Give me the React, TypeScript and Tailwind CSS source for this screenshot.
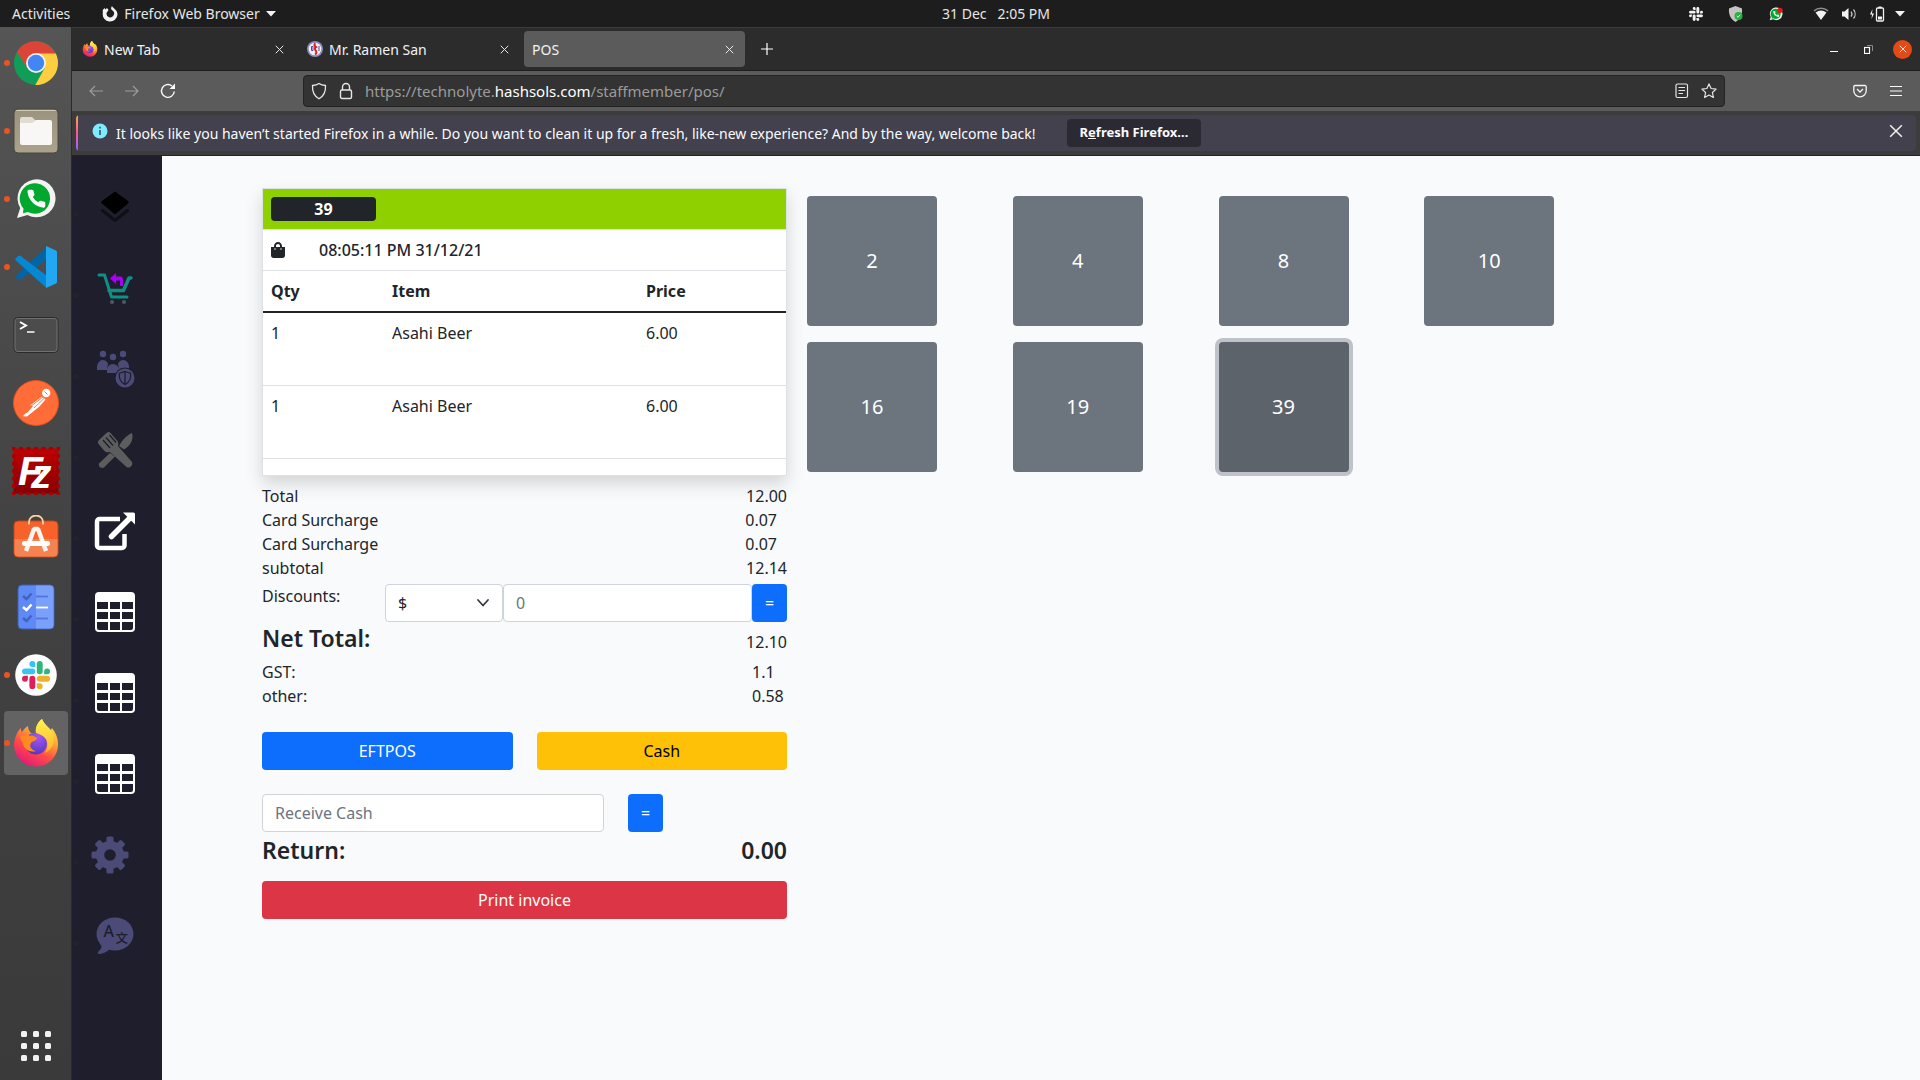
import type { ReactNode } from "react";
import { FaShoppingBag } from "react-icons/fa";

const SLACK = {
  pink: "M5.042 15.165a2.528 2.528 0 0 1-2.52 2.523A2.528 2.528 0 0 1 0 15.165a2.527 2.527 0 0 1 2.522-2.52h2.52v2.52zM6.313 15.165a2.527 2.527 0 0 1 2.521-2.52 2.527 2.527 0 0 1 2.521 2.52v6.313A2.528 2.528 0 0 1 8.834 24a2.528 2.528 0 0 1-2.521-2.522v-6.313z",
  blue: "M8.834 5.042a2.528 2.528 0 0 1-2.521-2.52A2.528 2.528 0 0 1 8.834 0a2.528 2.528 0 0 1 2.521 2.522v2.52H8.834zM8.834 6.313a2.528 2.528 0 0 1 2.521 2.521 2.528 2.528 0 0 1-2.521 2.521H2.522A2.528 2.528 0 0 1 0 8.834a2.528 2.528 0 0 1 2.522-2.521h6.312z",
  green: "M18.956 8.834a2.528 2.528 0 0 1 2.522-2.521A2.528 2.528 0 0 1 24 8.834a2.528 2.528 0 0 1-2.522 2.521h-2.522V8.834zM17.688 8.834a2.528 2.528 0 0 1-2.523 2.521 2.527 2.527 0 0 1-2.52-2.521V2.522A2.527 2.527 0 0 1 15.165 0a2.528 2.528 0 0 1 2.523 2.522v6.312z",
  yellow: "M15.165 18.956a2.528 2.528 0 0 1 2.523 2.522A2.528 2.528 0 0 1 15.165 24a2.527 2.527 0 0 1-2.52-2.522v-2.522h2.52zM15.165 17.688a2.527 2.527 0 0 1-2.52-2.523 2.526 2.526 0 0 1 2.52-2.52h6.313A2.527 2.527 0 0 1 24 15.165a2.528 2.528 0 0 1-2.522 2.523h-6.313z",
};

const PHONE =
  "M22 16.92v3a2 2 0 0 1-2.18 2 19.79 19.79 0 0 1-8.63-3.07 19.5 19.5 0 0 1-6-6 19.79 19.79 0 0 1-3.07-8.67A2 2 0 0 1 4.11 2h3a2 2 0 0 1 2 1.72c.127.96.361 1.903.7 2.81a2 2 0 0 1-.45 2.11L8.09 9.91a16 16 0 0 0 6 6l1.27-1.27a2 2 0 0 1 2.11-.45c.907.339 1.85.573 2.81.7A2 2 0 0 1 22 16.92z";

/* ---------- Dock icons (48 × 48 canvas) ---------- */

function ChromeIcon() {
  return (
    <svg viewBox="0 0 48 48" className="size-12">
      <circle cx="24" cy="24" r="22" fill="#0f9d58" />
      <path d="M4.9 13A22 22 0 0 1 43.4 14.5H24L15.3 29z" fill="#db4437" />
      <path d="M24 14.5h19.8A22 22 0 0 1 23.3 46L32.7 29z" fill="#ffcd40" />
      <circle cx="24" cy="24" r="10" fill="#f1f1f1" />
      <circle cx="24" cy="24" r="8.2" fill="#4285f4" />
    </svg>
  );
}

function FilesIcon() {
  return (
    <svg viewBox="0 0 48 48" className="size-12">
      <defs>
        <linearGradient id="files-bg" x1="0" y1="0" x2="0" y2="1">
          <stop offset="0" stopColor="#9b937d" />
          <stop offset="1" stopColor="#aaa28c" />
        </linearGradient>
      </defs>
      <rect x="2" y="2" width="44" height="44" rx="4" fill="url(#files-bg)" stroke="#4a463c" />
      <path d="M4 3.5h40" stroke="#cfc8b4" />
      <path d="M8 17v-5a2 2 0 0 1 2-2h10l4 4h-2v3z" fill="#e0dcd0" />
      <path d="M8 16h12l4-3h14a2 2 0 0 1 2 2v21a2 2 0 0 1-2 2H10a2 2 0 0 1-2-2z" fill="#f8f7f5" />
    </svg>
  );
}

function WhatsAppIcon({ className, badge }: { className: string; badge?: boolean }) {
  return (
    <svg viewBox="0 0 48 48" className={className}>
      <path d="M5 43 8.2 33A19 19 0 1 1 15.5 40z" fill="#f3f3f3" />
      <path d="M11.5 33.5A15.2 15.2 0 1 1 16 37l-5 1.2z" fill="#00a82d" />
      <g transform="translate(13.5 13) scale(0.9)">
        <path d={PHONE} fill="#f8f8f8" />
      </g>
      {badge && <circle cx="36" cy="13" r="8" fill="#f01414" />}
    </svg>
  );
}

function VSCodeIcon() {
  return (
    <svg viewBox="0 0 48 48" className="size-12">
      <path d="M3.4 33.5 34.5 4v12L8.6 36.6a2 2 0 0 1-2.6 0l-2.6-2.4z" fill="#0065a9" />
      <path d="M3.4 15.7 6 13.2a2 2 0 0 1 2.7-.1L34.5 32.5V45L3.4 17a1 1 0 0 1 0-1.3z" fill="#0588d1" />
      <path d="m34 3 10 4.6a1.8 1.8 0 0 1 1 1.6v29.6a1.8 1.8 0 0 1-1 1.6L34 45z" fill="#22a7f2" />
    </svg>
  );
}

function TerminalIcon() {
  return (
    <svg viewBox="0 0 48 48" className="size-12">
      <rect x="2" y="6.500" width="44" height="35" rx="4" fill="#4c4c4c" stroke="#2b2b2b" />
      <rect x="3" y="7.500" width="42" height="33" rx="3" fill="none" stroke="#707070" />
      <path d="m8 11 6 3.500L8 18" fill="none" stroke="#fff" strokeWidth="2" />
      <path d="M15 21h7.500" stroke="#fff" strokeWidth="1.500" />
    </svg>
  );
}

function PostmanIcon() {
  return (
    <svg viewBox="0 0 48 48" className="size-12">
      <circle cx="24" cy="24" r="22.500" fill="#ff6c37" stroke="#e0521f" />
      <circle cx="34.200" cy="14" r="4.200" fill="#fff" />
      <path d="m30 17.500 3.500 3-6 7L15 37.500l-4-.2 1.500-2 3.500-2.300 5-6-3-.5z" fill="#fff" />
      <path d="m19 27 12-9M22 29l10-9.500M32.500 12.500l3 3" stroke="#ff6c37" strokeWidth="0.9" />
    </svg>
  );
}

function FileZillaIcon() {
  return (
    <svg viewBox="0 0 48 48" className="size-12">
      <defs>
        <linearGradient id="fz-bg" x1="0" y1="0" x2="0" y2="1">
          <stop offset="0" stopColor="#bf0000" />
          <stop offset="1" stopColor="#860000" />
        </linearGradient>
      </defs>
      <rect x="1.500" y="1.500" width="45" height="45" fill="url(#fz-bg)" />
      <rect x="1.500" y="1.500" width="45" height="45" fill="none" stroke="#a80000" strokeWidth="4" strokeLinecap="round" strokeDasharray="0.1 7.400" />
      <text x="6" y="38" fontFamily="Liberation Sans" fontSize="41" fontWeight="700" fontStyle="italic" fill="#fff">
        F<tspan dx="-12" dy="3">z</tspan>
      </text>
    </svg>
  );
}

function SoftwareIcon() {
  return (
    <svg viewBox="0 4 48 48" className="size-12">
      <rect x="2" y="10" width="44" height="36" rx="4" fill="#f8622a" stroke="#c4441a" />
      <path d="M2.500 28h43v13.500a4 4 0 0 1-4 4h-35a4 4 0 0 1-4-4z" fill="#f58352" />
      <path d="M17 13.500V11a7 6.500 0 0 1 14 0v2.500" fill="none" stroke="#f2d6a8" strokeWidth="1.800" />
      <path d="m14 40 8-22h4l8 22" fill="none" stroke="#f6f3f0" strokeWidth="4.500" strokeLinejoin="bevel" />
      <rect x="10" y="30" width="28" height="5" rx="2.500" fill="#fff" />
    </svg>
  );
}

function TodoIcon() {
  return (
    <svg viewBox="0 0 48 48" className="size-12">
      <rect x="6" y="2" width="36" height="44" rx="4" fill="#5e89f6" stroke="#3e5fae" />
      <path d="M24 2.500h14a3.500 3.500 0 0 1 3.500 3.500v36a3.500 3.500 0 0 1-3.500 3.500H24z" fill="#7ba0fb" />
      <g fill="none" strokeWidth="2.500">
        <path d="m11 13 3.500 3 5-5.500" stroke="#4264bd" />
        <path d="M24 13.500h12" stroke="#5077d6" strokeWidth="1.800" />
        <path d="m11 24 3.500 3 5-5.500" stroke="#fff" />
        <path d="M24 24.500h12" stroke="#fff" strokeWidth="1.800" />
        <path d="m11 35 3.500 3 5-5.500" stroke="#4264bd" />
        <path d="M24 35.500h12" stroke="#5077d6" strokeWidth="1.800" />
      </g>
    </svg>
  );
}

function SlackDockIcon() {
  return (
    <svg viewBox="0 0 48 48" className="size-12">
      <circle cx="24" cy="24" r="20.800" fill="#fff" />
      <g transform="translate(10 10) scale(1.17)">
        <path d={SLACK.pink} fill="#e01e5a" />
        <path d={SLACK.blue} fill="#36c5f0" />
        <path d={SLACK.green} fill="#2eb67d" />
        <path d={SLACK.yellow} fill="#ecb22e" />
      </g>
    </svg>
  );
}

function FirefoxIcon({ className }: { className: string }) {
  return (
    <svg viewBox="0 0 48 48" className={className}>
      <defs>
        <linearGradient id="ff-body" x1="0.8" y1="0" x2="0.25" y2="1">
          <stop offset="0" stopColor="#fff44f" />
          <stop offset="0.35" stopColor="#ffa436" />
          <stop offset="0.65" stopColor="#ff4a48" />
          <stop offset="1" stopColor="#e3147e" />
        </linearGradient>
        <linearGradient id="ff-flame" x1="0" y1="0" x2="0" y2="1">
          <stop offset="0" stopColor="#fff44f" />
          <stop offset="1" stopColor="#ffb02e" />
        </linearGradient>
        <radialGradient id="ff-globe" cx="0.6" cy="0.2" r="0.9">
          <stop offset="0" stopColor="#a855f7" />
          <stop offset="1" stopColor="#4a35b5" />
        </radialGradient>
      </defs>
      <path
        d="M4 17c1-4 3-6 5-8 0 2 0 3 1 4 2-3 4-5 6-6 0 3 1 5 3 7h5c-1-6 2-11 6-14 2 5 5 7 9 11l1-2c4 5 6 10 6 16a22 22 0 0 1-44 1c0-4 1-7 2-9z"
        fill="url(#ff-body)"
      />
      <circle cx="24" cy="24.500" r="11" fill="url(#ff-globe)" />
      <path d="M24 14c-1-6 2-11 6-14 2 6 9 9 11 16 2 8-1 15-8 18 3-5 4-12-1-16-2-2-5-3-8-4z" fill="url(#ff-flame)" />
      <path d="M8 18c3-3 7-3 10-1 3-1 4 0 7 2 0 3-5 3-6 5-2 3 0 7 5 8-6 2-12-2-13-7z" fill="#ff8a1f" />
    </svg>
  );
}

/* ---------- Shop side menu icons (48 × 48 canvas) ---------- */

const LayersIcon = () => (
  <svg viewBox="0 0 48 48" className="size-12">
    <path d="m24 8.500 13 9.500a1.500 1.500 0 0 1 0 2.500l-13 11-13-11a1.500 1.500 0 0 1 0-2.500z" fill="#000" />
    <path d="m11.500 27.500 12.500 10 12.500-10" fill="none" stroke="#0f0f16" strokeWidth="3" strokeLinecap="round" strokeLinejoin="round" />
  </svg>
);

const CartIcon = () => (
  <svg viewBox="0 0 48 48" className="size-12">
    <path d="M8 11h5.500l7 22H36" fill="none" stroke="#109083" strokeWidth="3" strokeLinejoin="round" strokeLinecap="round" />
    <path d="M40 14h-2l-5.500 12.500H18" fill="none" stroke="#109083" strokeWidth="3.500" strokeLinejoin="round" strokeLinecap="round" />
    <path d="M25 9v3.500h3.500c3 0 3.500 1.500 3.500 3.500v6h-3v-5.500h-4V20l-6-5.500z" fill="#a600f5" />
    <circle cx="21" cy="38" r="2" fill="#4d5a68" />
    <circle cx="33" cy="38" r="2" fill="#4d5a68" />
  </svg>
);

const StaffIcon = () => (
  <svg viewBox="0 0 48 48" className="size-12" fill="#4c4b78">
    <circle cx="12" cy="9" r="3.200" />
    <circle cx="22" cy="12" r="3.200" />
    <circle cx="32" cy="9" r="3.200" />
    <path d="M6 25v-4a6 6 0 0 1 8-5.500c1.500.5 2 2 3 3l-1 6.500z" />
    <path d="M38 25v-4a6 6 0 0 0-8-5.500c-1.500.5-2 2-3 3l1 6.500z" />
    <path d="M16 28v-3a6 6 0 0 1 12 0v3z" />
    <circle cx="34" cy="33" r="10.500" fill="#1f1e2c" />
    <circle cx="34" cy="33" r="9.500" />
    <path d="m34 26.500 5.500 1.700c.8 5-1.500 9.300-5.500 11.300-4-2-6.300-6.300-5.500-11.300z" fill="none" stroke="#1f1e2c" strokeWidth="1.300" />
    <path d="M34 26.500v13" stroke="#1f1e2c" strokeWidth="1.300" />
  </svg>
);

const CutleryIcon = () => (
  <svg viewBox="0 0 48 48" className="size-12" fill="#5d5d5d">
    <path d="M41 7c2 7-2 13-8 16.500l-5-3.500C32 13 36 9 41 7z" />
    <path d="m19 27 5 3.500-11 11c-3 1.500-6-1-5-4z" />
    <path d="M16 6.500c1.500-1 2.500-.5 3.500.5l7 8c1 1.500 1 3 .5 5L41 36c1.500 3-2.500 7-5.500 5L19 26c-3 .5-4 .5-5.500-1l-6-7c-1-1.500-.5-3 .5-4z" />
    <path d="m12 14 7 8M15 11.500l7 8M18.500 9l6.500 7.500" stroke="#1f1e2c" strokeWidth="1.300" />
  </svg>
);

const ExternalIcon = () => (
  <svg viewBox="0 -2 48 48" className="size-12" fill="none" stroke="#fff">
    <path d="M29 10H8.500A2.500 2.500 0 0 0 6 12.500v24A2.500 2.500 0 0 0 8.500 39H31a2.500 2.500 0 0 0 2.500-2.500V25" strokeWidth="4.500" />
    <path d="M20.500 27.500 40 8" strokeWidth="5.500" strokeLinecap="round" />
    <path d="M32 3.500h10.500a1.500 1.500 0 0 1 1.500 1.500v10.500z" fill="#fff" stroke="none" />
  </svg>
);

const TableIcon = () => (
  <svg viewBox="0 0 48 48" className="size-12">
    <rect x="4" y="4" width="40" height="40" rx="4" fill="#fff" />
    <path
      d="M6 14h11v7H6zM19 14h10v7H19zM31 14h11v7H31zM6 24h11v7H6zM19 24h10v7H19zM31 24h11v7H31zM6 34h11v8H8a2 2 0 0 1-2-2zM19 34h10v8H19zM31 34h11v6a2 2 0 0 1-2 2h-9z"
      fill="#1f1e2c"
    />
  </svg>
);

const GearIcon = () => (
  <svg viewBox="0 0 48 48" className="size-12" fill="#4c4b78">
    {[0, 45, 90, 135].map((a) => (
      <rect key={a} x="20.500" y="5.500" width="7" height="37" rx="1.500" transform={`rotate(${a} 24 24)`} />
    ))}
    <circle cx="24" cy="24" r="14" />
    <circle cx="24" cy="24" r="5.800" fill="#1f1e2c" />
  </svg>
);

const TranslateIcon = () => (
  <svg viewBox="0 0 48 48" className="size-12">
    <ellipse cx="24" cy="22" rx="18.500" ry="16.500" fill="#4c4b78" />
    <path d="m8 30 2.500 4c0 2.500-1.500 4-3.500 6-.8 1 0 2 1.500 2 4-.5 7-2 10-4.500z" fill="#4c4b78" />
    <text x="12.500" y="25" fontFamily="Noto Sans" fontSize="16" fontWeight="500" fill="#1f1e2c">A</text>
    <text x="24.500" y="30.500" fontFamily="Noto Sans CJK SC" fontSize="12.500" fontWeight="500" fill="#1f1e2c">文</text>
  </svg>
);

/* ---------- Desktop ---------- */

function TopBar() {
  return (
    <header className="grid h-[27px] shrink-0 grid-cols-3 items-center bg-[#1d1d1d] text-[14px] text-[#e6e6e6]">
      <div className="flex items-center pl-3">
        <button>Activities</button>
        <button className="ml-8 flex items-center">
          <svg viewBox="0 0 16 16" className="mr-[6px] size-4">
            <path d="M.8 4 2.500 2l.8 1.500L5 2l1.500 2L4.500 7a3.800 3.800 0 1 0 6-2.500C9 3.500 8.500 2 10 0c.5 2 5.500 3.500 5.500 8.500a7.400 7.400 0 1 1-14.700-1.500z" fill="#f2f2f2" />
          </svg>
          Firefox Web Browser
          <svg viewBox="0 0 10 6" className="ml-[6px] h-[6px] w-[10px]"><path d="M0 0h10L5 5.500z" fill="#f2f2f2" /></svg>
        </button>
      </div>
      <button className="justify-self-center whitespace-pre pl-[72px]">31 Dec   2:05 PM</button>
      <div className="flex items-center justify-end pr-[15px]">
        <svg viewBox="0 0 24 24" className="size-[14px]" fill="#f2f2f2">
          <path d={SLACK.pink} /><path d={SLACK.blue} /><path d={SLACK.green} /><path d={SLACK.yellow} />
        </svg>
        <svg viewBox="0 0 16 16" className="ml-[25px] size-4">
          <path d="M7.500 0 14 2.500c.5 6-1.500 10.500-6.500 13.500C2.500 13 .5 8.500 1 2.500z" fill="#c4c4c4" />
          <circle cx="10.500" cy="10" r="4" fill="#25b33e" />
          <path d="m8.700 10 1.300 1.300 2.200-2.600" fill="none" stroke="#d9ffe0" />
        </svg>
        <WhatsAppIcon className="ml-6 size-4" badge />
        <svg viewBox="0 0 16 14" className="ml-[29px] h-[14px] w-4">
          <path d="M1 3.800A11 11 0 0 1 15 3.800" fill="none" stroke="#8f8f8f" strokeWidth="1.500" />
          <path d="M2.500 5.500a9 9 0 0 1 11 0L8 13z" fill="#f2f2f2" />
        </svg>
        <svg viewBox="0 0 16 14" className="ml-3 h-[14px] w-4">
          <path d="M1 4.500h2.500L7.500 1v12L3.500 9.500H1z" fill="#f2f2f2" />
          <path d="M10 4.500a4 4 0 0 1 0 5M12.500 2.500a7 7 0 0 1 0 9" fill="none" stroke="#c9c9c9" strokeWidth="1.200" />
        </svg>
        <svg viewBox="0 0 16 16" className="ml-3 size-4">
          <path d="M3.500 3 1 8.500h2L2.500 13 5 7.500H3z" fill="#f2f2f2" />
          <rect x="7.500" y="2" width="7" height="13" rx="1" fill="none" stroke="#f2f2f2" strokeWidth="1.300" />
          <path d="M9.500.5h3V2h-3zM9 10.500h4v3H9z" fill="#f2f2f2" />
        </svg>
        <svg viewBox="0 0 10 6" className="ml-[10px] h-[6px] w-[10px]"><path d="M0 0h10L5 5.500z" fill="#f2f2f2" /></svg>
      </div>
    </header>
  );
}

const dockItems: { name: string; icon: ReactNode; running?: boolean; active?: boolean }[] = [
  { name: "Chrome", icon: <ChromeIcon />, running: true },
  { name: "Files", icon: <FilesIcon />, running: true },
  { name: "WhatsApp", icon: <WhatsAppIcon className="size-12" />, running: true },
  { name: "VS Code", icon: <VSCodeIcon />, running: true },
  { name: "Terminal", icon: <TerminalIcon /> },
  { name: "Postman", icon: <PostmanIcon /> },
  { name: "FileZilla", icon: <FileZillaIcon /> },
  { name: "Software", icon: <SoftwareIcon /> },
  { name: "To Do", icon: <TodoIcon /> },
  { name: "Slack", icon: <SlackDockIcon />, running: true },
  { name: "Firefox", icon: <FirefoxIcon className="size-12" />, running: true, active: true },
];

function Dock() {
  return (
    <nav aria-label="Dock" className="flex w-[72px] shrink-0 flex-col gap-1 border-r border-[#2a2a2a] bg-linear-to-b from-[#555555] via-[#424242] to-[#3a3a3a] px-1 pt-1 pb-[2px]">
      {dockItems.map((item) => (
        <button
          key={item.name}
          aria-label={item.name}
          className={`relative flex size-16 items-center justify-center rounded ${item.active ? "bg-[#636363]" : ""}`}
        >
          {item.running && <span className="absolute top-[29px] left-0 size-[6px] rounded-full bg-[#e95420]" />}
          {item.icon}
        </button>
      ))}
      <button aria-label="Show applications" className="mt-auto flex size-16 items-center justify-center">
        <svg viewBox="0 0 30 30" className="size-[30px]" fill="#f2f2f2">
          {[0, 12, 24].map((y) => [0, 12, 24].map((x) => <rect key={`${x}-${y}`} x={x} y={y} width="6" height="6" rx="1.500" />))}
        </svg>
      </button>
    </nav>
  );
}

/* ---------- Browser ---------- */

function Cross({ className }: { className: string }) {
  return (
    <svg viewBox="0 0 12 12" className={className} fill="none" stroke="#f0f0f0">
      <path d="m1 1 10 10M11 1 1 11" strokeWidth="1.300" />
    </svg>
  );
}

function Tab({ title, icon, active }: { title: string; icon?: ReactNode; active?: boolean }) {
  return (
    <div className={`flex h-9 w-[221px] items-center rounded pr-2 pl-2 ${active ? "bg-[#5b5b5b]" : ""}`}>
      {icon && <span className="mr-[6px]">{icon}</span>}
      <button className="flex-1 text-left">{title}</button>
      <button aria-label={`Close ${title}`} className="flex size-4 items-center justify-center">
        <Cross className="size-[9px]" />
      </button>
    </div>
  );
}

function TabBar() {
  return (
    <div className="flex h-11 shrink-0 items-center gap-1 border-t border-b border-t-[#3c3c3c] border-b-[#1e1e1e] bg-[#2c2c2c] pr-2 pl-[2px] text-[14px] text-[#f2f2f2]">
      <Tab title="New Tab" icon={<FirefoxIcon className="size-4" />} />
      <Tab
        title="Mr. Ramen San"
        icon={
          <svg viewBox="0 0 16 16" className="size-4">
            <circle cx="8" cy="8" r="8" fill="#8c8bc0" />
            <circle cx="8" cy="8" r="6.300" fill="#f1eef4" />
            <path d="M8.500 2.500c-2 1-1 2.500.5 3.500-2 1-1 2.500 0 4s0 3-1 3.500" fill="none" stroke="#e01b24" strokeWidth="2" />
            <path d="M4.500 5.500h1.500v4H4.500zM12 5v5" fill="none" stroke="#4f4b8c" />
          </svg>
        }
      />
      <Tab title="POS" active />
      <button aria-label="New tab" className="ml-2 flex size-5 items-center justify-center">
        <svg viewBox="0 0 12 12" className="size-3"><path d="M6 0v12M0 6h12" stroke="#fff" strokeWidth="1.200" /></svg>
      </button>
      <div className="ml-auto flex items-center">
        <button aria-label="Minimize" className="flex size-6 items-end justify-center pb-[9px]">
          <span className="h-[1px] w-2 bg-white" />
        </button>
        <button aria-label="Restore" className="ml-[10px] flex size-6 items-center justify-center">
          <svg viewBox="0 0 9 9" className="size-[9px]" fill="none">
            <path d="M3 .5h5.500V6" stroke="#8a8a8a" />
            <rect x=".5" y="2.500" width="5" height="6" stroke="#fff" strokeWidth="1.200" />
          </svg>
        </button>
        <button aria-label="Close window" className="ml-[13px] flex size-[19px] items-center justify-center rounded-full bg-[#e24a16]">
          <Cross className="size-2" />
        </button>
      </div>
    </div>
  );
}

function NavBar() {
  return (
    <div className="flex h-10 shrink-0 items-center bg-[#5b5b5b] pr-[17px] text-[15px]">
      <button aria-label="Back" className="ml-[17px]">
        <svg viewBox="0 0 14 12" className="h-3 w-[14px]" fill="none" stroke="#9c9c9c"><path d="M14 6H1M6 1 1 6l5 5" strokeWidth="1.200" /></svg>
      </button>
      <button aria-label="Forward" className="ml-[22px]">
        <svg viewBox="0 0 14 12" className="h-3 w-[14px]" fill="none" stroke="#9c9c9c"><path d="M0 6h13M8 1l5 5-5 5" strokeWidth="1.200" /></svg>
      </button>
      <button aria-label="Reload" className="ml-[21px]">
        <svg viewBox="0 0 16 16" className="size-4" fill="none" stroke="#fbfbfb">
          <path d="M14.300 8.500A6.400 6.400 0 1 1 12 3" strokeWidth="1.400" />
          <path d="M15 .5V6H9.500z" fill="#fbfbfb" stroke="none" />
        </svg>
      </button>
      <div className="ml-[127px] flex h-8 flex-1 items-center rounded border border-[#232323] bg-[#333333] px-[7px]">
        <svg viewBox="0 0 16 18" className="h-[18px] w-4 shrink-0" fill="none" stroke="#e6e6e6">
          <path d="M8 1.500c2 1.300 4 1.800 6.500 2C14.800 9 13 14 8 16.800 3 14 1.200 9 1.500 3.500 4 3.300 6 2.800 8 1.500z" strokeWidth="1.300" />
        </svg>
        <svg viewBox="0 0 14 18" className="ml-3 h-[18px] w-[14px] shrink-0" fill="none" stroke="#e6e6e6" strokeWidth="1.400">
          <rect x="1.500" y="8" width="11" height="8.500" rx="1.500" />
          <path d="M3.500 8V5a3.500 3.500 0 0 1 7 0v3" />
        </svg>
        <a href="#pos" className="ml-3 flex-1 text-[#9b9b9b]">
          https://technolyte.<span className="text-white">hashsols.com</span>/staffmember/pos/
        </a>
        <svg viewBox="0 0 14 16" className="h-4 w-[14px]" fill="none" stroke="#e6e6e6" strokeWidth="1.200">
          <rect x="1" y="1" width="11.500" height="13.500" rx="1.500" />
          <path d="M3.500 4.500H10M3.500 7.500H10M3.500 10.500H8" />
        </svg>
        <svg viewBox="0 0 16 16" className="ml-3 size-4" fill="none" stroke="#e6e6e6" strokeWidth="1.200">
          <path d="m8 .9 2.100 4.600 5 .6-3.700 3.400 1 5L8 12l-4.400 2.500 1-5L.9 6.100l5-.6z" strokeLinejoin="round" />
        </svg>
      </div>
      <button aria-label="Save to Pocket" className="ml-32">
        <svg viewBox="0 0 14 14" className="size-[14px]" fill="none" stroke="#f5f5f5" strokeWidth="1.300">
          <path d="M2 1.500h10a1.200 1.200 0 0 1 1.200 1.200v4a6.200 6.200 0 0 1-12.400 0v-4A1.200 1.200 0 0 1 2 1.500z" />
          <path d="m4 5 3 3 3-3" />
        </svg>
      </button>
      <button aria-label="Menu" className="ml-[22px]">
        <svg viewBox="0 0 14 12" className="h-3 w-[14px]"><path d="M1 1.500h12M1 6h12M1 10.500h12" stroke="#fbfbfb" strokeWidth="1.200" /></svg>
      </button>
    </div>
  );
}

function Notice() {
  return (
    <div className="shrink-0 border-b border-[#242424] bg-[#3c3c3c] py-1 pr-1 pl-1">
      <div className="flex h-9 items-center overflow-hidden rounded bg-[#42414d] pr-[13px] text-[14px] text-[#fbfbfe]">
        <span className="h-full w-[2px] bg-linear-to-b from-[#ffa436] via-[#ff4f9a] to-[#9059ff]" />
        <svg viewBox="0 0 16 16" className="mr-2 mb-1 ml-[14px] size-4">
          <circle cx="8" cy="8" r="7.500" fill="#80ebff" />
          <path d="M8 7v5M8 3.800v1.800" stroke="#2b4a55" strokeWidth="1.500" />
        </svg>
        <p>
          It looks like you haven’t started Firefox in a while. Do you want to clean it up for a fresh, like-new experience? And by the way, welcome back!
        </p>
        <button className="ml-[31px] h-7 rounded bg-[#2b2a33] px-[13px] text-[13px] font-bold">
          R<u>e</u>fresh Firefox…
        </button>
        <button aria-label="Dismiss" className="mb-1 ml-auto">
          <Cross className="size-[14px]" />
        </button>
      </div>
    </div>
  );
}

/* ---------- Point of sale page ---------- */

const menu = [
  { name: "Items", icon: <LayersIcon /> },
  { name: "Orders", icon: <CartIcon /> },
  { name: "Staff", icon: <StaffIcon /> },
  { name: "Kitchen", icon: <CutleryIcon /> },
  { name: "Open", icon: <ExternalIcon /> },
  { name: "Tables 1", icon: <TableIcon /> },
  { name: "Tables 2", icon: <TableIcon /> },
  { name: "Tables 3", icon: <TableIcon /> },
  { name: "Settings", icon: <GearIcon />, shifted: true },
  { name: "Language", icon: <TranslateIcon /> },
];

function SideMenu() {
  return (
    <aside className="w-[90px] shrink-0 bg-[#1f1e2c] pt-[10px]">
      <ul>
        {menu.map((m) => (
          <li key={m.name} className="flex h-[81px] items-center">
            <span className="mt-4 ml-[2px] size-[5px] rounded-full bg-[#22242b]" />
            <a href={`#${m.name}`} aria-label={m.name} className={m.shifted ? "ml-[7px]" : "ml-3"}>
              {m.icon}
            </a>
          </li>
        ))}
      </ul>
    </aside>
  );
}

const orderLines = [
  { qty: 1, item: "Asahi Beer", price: "6.00" },
  { qty: 1, item: "Asahi Beer", price: "6.00" },
];

function OrderCard() {
  return (
    <section className="border border-[#dee2e6] bg-white pb-4 shadow-[0_8px_16px_rgba(0,0,0,0.15)]">
      <table className="w-full table-fixed border-collapse text-left">
        <colgroup>
          <col className="w-[121px]" />
          <col className="w-[254px]" />
          <col />
        </colgroup>
        <thead>
          <tr className="h-10 border-b border-[#dee2e6] bg-[#8fd000]">
            <th colSpan={3} className="px-2">
              <span className="block h-6 w-[105px] rounded bg-[#212529] text-center leading-6 font-bold text-white">39</span>
            </th>
          </tr>
          <tr className="h-[41px] border-b border-[#dee2e6]">
            <th colSpan={3} className="px-2 font-medium">
              <span className="flex items-center">
                <FaShoppingBag className="mr-[34px] h-4 w-[14px]" aria-hidden />
                08:05:11 PM 31/12/21
              </span>
            </th>
          </tr>
          <tr className="h-[42px] border-b-2 border-[#212529] font-bold">
            <th className="px-2">Qty</th>
            <th className="px-2">Item</th>
            <th className="px-2">Price</th>
          </tr>
        </thead>
        <tbody>
          {orderLines.map((l, i) => (
            <tr key={i} className="h-[73px] border-b border-[#dee2e6] align-top">
              <td className="p-2">{l.qty}</td>
              <td className="p-2">{l.item}</td>
              <td className="p-2">{l.price}</td>
            </tr>
          ))}
        </tbody>
      </table>
    </section>
  );
}

function AmountRow({ label, value, inset = "" }: { label: string; value: string; inset?: string }) {
  return (
    <div className="flex justify-between">
      <span>{label}</span>
      <span className={inset}>{value}</span>
    </div>
  );
}

function Totals() {
  return (
    <section className="pt-2">
      <AmountRow label="Total" value="12.00" />
      <AmountRow label="Card Surcharge" value="0.07" inset="pr-[10px]" />
      <AmountRow label="Card Surcharge" value="0.07" inset="pr-[10px]" />
      <AmountRow label="subtotal" value="12.14" />
      <div className="mt-1 flex">
        <label htmlFor="discount" className="w-[123px]">Discounts:</label>
        <div className="relative w-[118px]">
          <select aria-label="Discount type" defaultValue="$" className="h-[38px] w-full appearance-none rounded border border-[#ced4da] bg-white px-3">
            <option>$</option>
            <option>%</option>
          </select>
          <svg viewBox="0 0 16 16" className="pointer-events-none absolute top-[11px] right-3 size-4" fill="none">
            <path d="m3 5 5 5.500L13 5" stroke="#343a40" strokeWidth="1.800" strokeLinecap="round" strokeLinejoin="round" />
          </svg>
        </div>
        <input id="discount" placeholder="0" className="h-[38px] min-w-0 flex-1 rounded border border-[#ced4da] bg-white px-3 placeholder:text-[#6c757d]" />
        <button aria-label="Apply discount" className="h-[38px] w-[35px] rounded bg-[#0d6efd] text-white">=</button>
      </div>
      <div className="mt-[2px] flex h-9 items-center justify-between">
        <h2 className="mb-2 text-[23px] leading-7 font-semibold">Net Total:</h2>
        <span>12.10</span>
      </div>
      <AmountRow label="GST:" value="1.1" inset="w-[35px]" />
      <AmountRow label="other:" value="0.58" inset="w-[35px]" />
    </section>
  );
}

function Payment() {
  return (
    <section>
      <div className="mt-6 grid grid-cols-2 gap-6">
        <button className="h-[38px] rounded bg-[#0d6efd] text-white">EFTPOS</button>
        <button className="h-[38px] rounded bg-[#ffc107] text-black">Cash</button>
      </div>
      <div className="mt-6 flex gap-6">
        <input aria-label="Receive Cash" placeholder="Receive Cash" className="h-[38px] w-[342px] rounded border border-[#ced4da] bg-white px-3 placeholder:text-[#6c757d]" />
        <button aria-label="Calculate return" className="h-[38px] w-[35px] rounded bg-[#0d6efd] text-white">=</button>
      </div>
      <div className="mt-1 flex justify-between text-[23px] leading-7 font-semibold">
        <h2>Return:</h2>
        <span>0.00</span>
      </div>
      <button className="mt-[17px] h-[38px] w-full rounded bg-[#dc3545] text-white">Print invoice</button>
    </section>
  );
}

const tables = [2, 4, 8, 10, 16, 19, 39];

function TableGrid() {
  return (
    <section aria-label="Tables" className="grid w-full max-w-[823px] grid-cols-4 content-start gap-y-4 pt-2">
      {tables.map((t) => (
        <button
          key={t}
          className={`size-[130px] rounded text-[20px] text-white ${t === 39 ? "bg-[#5c636a] ring-4 ring-[#bfc2c8]" : "bg-[#6c757d]"}`}
        >
          {t}
        </button>
      ))}
    </section>
  );
}

export default function App() {
  return (
    <div className="flex h-screen flex-col overflow-hidden font-['Noto_Sans','Noto_Sans_CJK_SC',sans-serif]">
      <TopBar />
      <div className="flex min-h-0 flex-1">
        <Dock />
        <div className="flex min-w-0 flex-1 flex-col">
          <TabBar />
          <NavBar />
          <Notice />
          <div className="flex min-h-0 flex-1 bg-[#f8fafc] text-[16px] leading-6 text-[#212529]">
            <SideMenu />
            <main className="flex min-w-0 flex-1 pt-8 pl-[100px]">
              <div className="mr-5 w-[525px] shrink-0">
                <OrderCard />
                <Totals />
                <Payment />
              </div>
              <TableGrid />
            </main>
          </div>
        </div>
      </div>
    </div>
  );
}
